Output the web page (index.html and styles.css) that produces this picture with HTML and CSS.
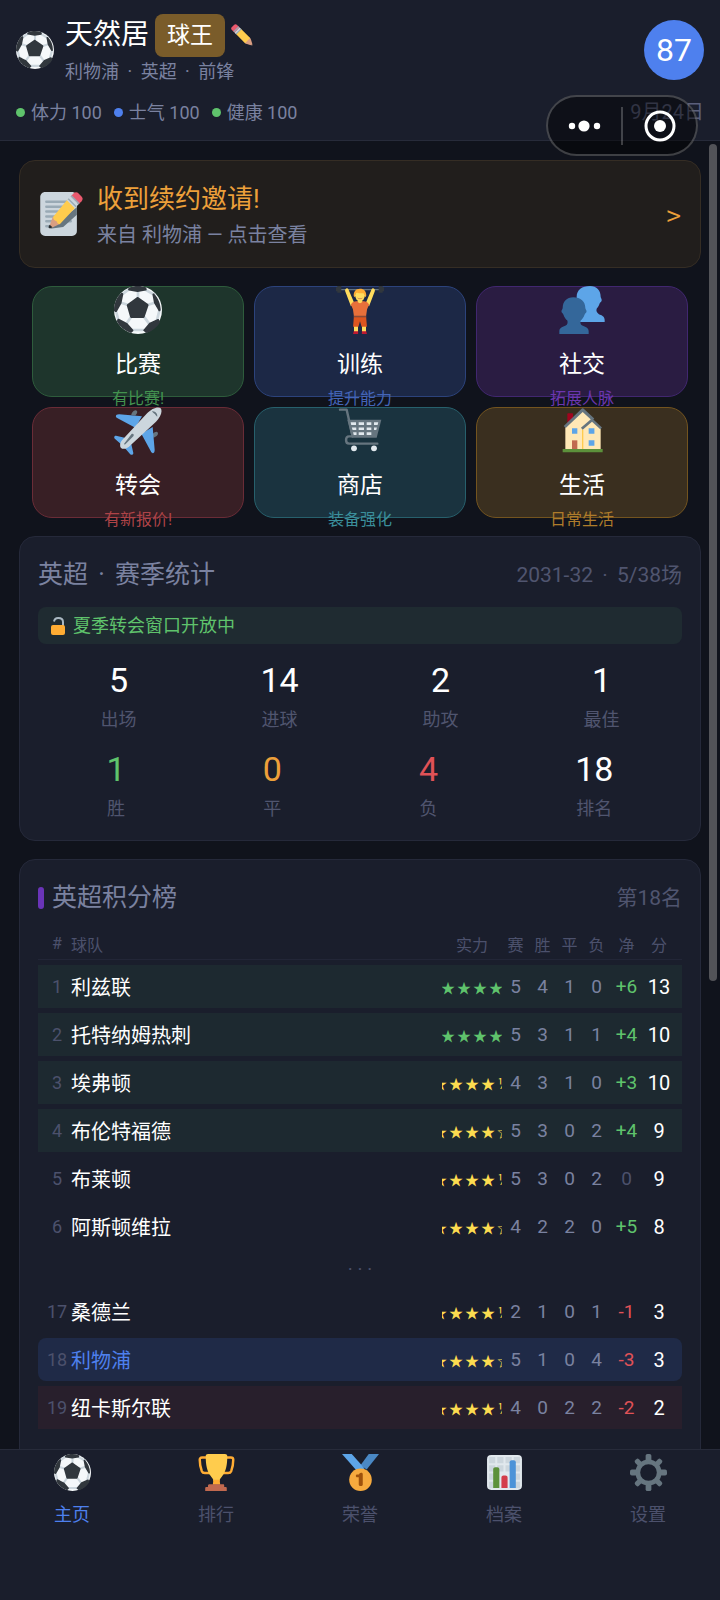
FILE: index.html
```html
<!DOCTYPE html>
<html lang="zh-CN">
<head>
    <meta charset="UTF-8">
    <meta name="viewport" content="width=device-width, initial-scale=1.0">
    <title>球王</title>
    <link rel="stylesheet" href="styles.css">
</head>
<body>
    <!-- shared icons -->
    <svg class="symbols" aria-hidden="true">
        <symbol id="ball" viewBox="0 0 36 36">
            <circle fill="#F5F8FA" cx="18" cy="18" r="18"/>
            <path fill="#CCD6DD" d="M18 11c-.552 0-1-.448-1-1V3c0-.552.448-1 1-1s1 .448 1 1v7c0 .552-.448 1-1 1zm-6.583 4.5c-.1 0-.202-.015-.302-.047l-8.041-2.542c-.527-.167-.819-.728-.652-1.255.166-.527.73-.818 1.255-.652l8.042 2.542c.527.167.819.729.652 1.255-.136.426-.53.699-.954.699zm13.625-.291c-.434 0-.833-.285-.96-.722-.154-.531.151-1.085.682-1.239l6.75-1.958c.531-.153 1.085.153 1.238.682.154.531-.151 1.085-.682 1.239l-6.75 1.958c-.092.027-.186.04-.278.04zm2.001 14.958c-.306 0-.606-.14-.803-.403l-5.459-7.333c-.33-.442-.238-1.069.205-1.399.442-.331 1.069-.238 1.399.205l5.459 7.333c.33.442.238 1.069-.205 1.399-.179.134-.389.198-.596.198zm-18.294-.083c-.197 0-.395-.058-.57-.179-.454-.316-.565-.938-.25-1.392l5.125-7.375c.315-.454.938-.566 1.392-.251.454.315.565.939.25 1.392l-5.125 7.375c-.194.281-.506.43-.822.43zM3.5 27.062c-.44 0-.844-.293-.965-.738L.347 18.262c-.145-.533.17-1.082.704-1.227.535-.141 1.083.171 1.227.704l2.188 8.062c.145.533-.17 1.082-.704 1.226-.088.025-.176.035-.262.035zM22 34h-9c-.552 0-1-.447-1-1s.448-1 1-1h9c.553 0 1 .447 1 1s-.447 1-1 1zm10.126-6.875c-.079 0-.16-.009-.24-.029-.536-.132-.864-.674-.731-1.21l2.125-8.625c.133-.536.679-.862 1.21-.732.536.132.864.674.731 1.211l-2.125 8.625c-.113.455-.521.76-.97.76zM30.312 7.688c-.17 0-.342-.043-.5-.134L22.25 3.179c-.478-.277-.642-.888-.364-1.367.275-.478.886-.643 1.366-.365l7.562 4.375c.478.277.642.889.364 1.367-.185.32-.521.499-.866.499zm-24.811 0c-.312 0-.618-.145-.813-.417-.322-.449-.22-1.074.229-1.396l6.188-4.438c.449-.322 1.074-.219 1.395.229.322.449.219 1.074-.229 1.396L6.083 7.5c-.177.126-.38.188-.582.188z"/>
            <path fill="#31373D" d="M25.493 13.516l-7.208-5.083c-.348-.245-.814-.243-1.161.006l-7.167 5.167c-.343.248-.494.684-.375 1.091l2.5 8.583c.124.426.515.72.96.72H22c.43 0 .81-.274.948-.681l2.917-8.667c.141-.419-.011-.881-.372-1.136zM1.292 19.542c.058 0 .117-.005.175-.016.294-.052.55-.233.697-.494l3.375-6c.051-.091.087-.188.108-.291L6.98 6.2c.06-.294-.016-.6-.206-.832C6.584 5.135 6.3 5 6 5h-.428C2.145 8.277 0 12.884 0 18c0 .266.028.525.04.788l.602.514c.182.156.413.24.65.24zm9.325-16.547c.106.219.313.373.553.412l6.375 1.042c.04.006.081.01.121.01.04 0 .081-.003.122-.01l6.084-1c.2-.033.38-.146.495-.314.116-.168.158-.375.118-.575l-.292-1.443C22.26.407 20.18 0 18 0c-2.425 0-4.734.486-6.845 1.356l-.521.95c-.117.213-.123.47-.017.689zm20.517 2.724l-1.504-.095c-.228-.013-.455.076-.609.249-.152.173-.218.402-.175.63l1.167 6.198c.017.086.048.148.093.224 1.492 2.504 3.152 5.301 3.381 5.782.024.084.062.079.114.151.14.195.372.142.612.142h.007c.198 0 .323.094.768-.753.001-.083.012-.164.012-.247 0-4.753-1.856-9.064-4.866-12.281zM14.541 33.376c.011-.199-.058-.395-.191-.544l-4.5-5c-.06-.066-.131-.122-.211-.163-5.885-3.069-5.994-3.105-6.066-3.13-.078-.025-.161-.039-.242-.039-.537 0-.695.065-1.185 2.024 2.236 4.149 6.053 7.316 10.644 8.703l1.5-1.333c.149-.132.239-.319.251-.518zm18.833-8.567c-.189-.08-.405-.078-.592.005l-6.083 2.667c-.106.046-.2.116-.274.205l-4.25 5.083c-.129.154-.19.352-.172.552.02.2.117.384.272.51.683.559 1.261 1.03 1.767 1.44 4.437-1.294 8.154-4.248 10.454-8.146l-.712-1.889c-.072-.193-.221-.347-.41-.427z"/>
        </symbol>
    </svg>

    <header class="header">
        <div class="profile">
            <svg class="profile-icon"><use href="#ball"/></svg>
            <div class="profile-info">
                <div class="name-row">
                    <h1 class="name">天然居</h1>
                    <span class="badge">球王</span>
                    <button class="edit" type="button" aria-label="编辑">
                        <svg viewBox="0 0 36 36">
                            <path fill="#D99E82" d="M35.222 33.598c-.647-2.101-1.705-6.059-2.325-7.566-.501-1.216-.969-2.438-1.544-3.014-.575-.575-1.553-.53-2.143.058L23.076 29.21c-.588.59-.633 1.568-.058 2.143.576.575 1.798 1.043 3.014 1.544 1.507.62 5.465 1.678 7.566 2.325 1 .3 1.924-.624 1.624-1.624z"/>
                            <path fill="#EA596E" d="M13.643 5.308c1.151 1.151 1.151 3.016 0 4.167l-4.167 4.168c-1.151 1.15-3.018 1.15-4.167 0L1.141 9.475c-1.15-1.151-1.15-3.016 0-4.167l4.167-4.167c1.15-1.151 3.016-1.151 4.167 0z"/>
                            <path fill="#FFCC4D" d="M31.353 23.018l-4.17 4.17-4.163 4.165L7.392 15.726l8.335-8.334z"/>
                            <path fill="#CCD6DD" d="M14.2 5.8l2.6 2.6-8.4 8.4-2.6-2.6z"/>
                            <path fill="#99AAB5" d="M12.1 3.8l1.6 1.6-8.3 8.3-1.6-1.6zM16 7.3l1.4 1.4-8.6 8.6L7.4 16z"/>
                            <path fill="#292F33" d="M35.2 35.2c.6-.6.3-1.6-.2-2.3l-2.1 2.1c.7.5 1.7.8 2.3.2z"/>
                        </svg>
                    </button>
                </div>
                <p class="club">利物浦<span class="sep"> · </span>英超<span class="sep"> · </span>前锋</p>
            </div>
            <span class="rating">87</span>
        </div>
        <div class="status-row">
            <ul class="status">
                <li><span class="dot green"></span>体力 100</li>
                <li><span class="dot blue"></span>士气 100</li>
                <li><span class="dot green"></span>健康 100</li>
            </ul>
            <time class="date">9月24日</time>
        </div>
    </header>

    <!-- mini program capsule -->
    <div class="capsule">
        <button type="button" aria-label="更多">
            <svg width="34" height="12" viewBox="0 0 34 12" fill="#fff">
                <circle cx="4" cy="6" r="3.200"/>
                <circle cx="16" cy="6" r="5.600"/>
                <circle cx="29" cy="6" r="3.200"/>
            </svg>
        </button>
        <span class="capsule-line"></span>
        <button type="button" aria-label="关闭">
            <svg width="32" height="32" viewBox="0 0 32 32">
                <circle cx="16" cy="16" r="14" fill="none" stroke="#fff" stroke-width="3"/>
                <circle cx="16" cy="16" r="6" fill="#fff"/>
            </svg>
        </button>
    </div>

    <main class="main">
        <span class="scroll-thumb"></span>

        <a class="notice" href="#contract">
            <svg class="notice-icon" viewBox="0 0 36 36">
                <path fill="#CCD6DD" d="M31 32c0 2.209-1.791 4-4 4H5c-2.209 0-4-1.791-4-4V4c0-2.209 1.791-4 4-4h22c2.209 0 4 1.791 4 4z"/>
                <path fill="#99AAB5" d="M27 24c0 .553-.447 1-1 1H6c-.552 0-1-.447-1-1 0-.553.448-1 1-1h20c.553 0 1 .447 1 1zm-16 4c0 .553-.448 1-1 1H6c-.552 0-1-.447-1-1 0-.553.448-1 1-1h4c.552 0 1 .447 1 1zM27 8c0 .552-.447 1-1 1H6c-.552 0-1-.448-1-1s.448-1 1-1h20c.553 0 1 .448 1 1zm0 4c0 .553-.447 1-1 1H6c-.552 0-1-.447-1-1 0-.553.448-1 1-1h20c.553 0 1 .447 1 1zm0 4c0 .553-.447 1-1 1H6c-.552 0-1-.447-1-1 0-.553.448-1 1-1h20c.553 0 1 .447 1 1zm0 4c0 .553-.447 1-1 1H6c-.552 0-1-.447-1-1 0-.553.448-1 1-1h20c.553 0 1 .447 1 1z"/>
                <path fill="#66757F" d="M31 12.5v6.2L19.8 28.6 9 30z"/>
                <path fill="#D99E82" d="M8.3 28.4l3.1-8.4 6 6-7.4 3.4z"/>
                <path fill="#EA596E" d="M28.2 1.3c1.3-1.3 2.9-1.4 4.2-.1l2.4 2.4c1.3 1.3 1.2 2.9-.1 4.2l-2.3 2.3-6.5-6.5z"/>
                <path fill="#FFCC4D" d="M23.3 6.2l6.5 6.5L17 26.4c-1.5-.3-2.2-1-2.5-2.5-1.6-.3-2.7-1.4-3-3.5z"/>
                <path fill="#CCD6DD" d="M25.9 3.6l6.5 6.5-3.1 3.1-6.5-6.5z"/>
                <path fill="#99AAB5" d="M26.8 2.7l6.5 6.5-.9.9-6.5-6.5zM24.3 5.2l6.5 6.5-.8.8L23.5 6z"/>
                <path fill="#292F33" d="M8.8 26.8l2.2 2.1c-1.2.9-2.5.9-2.9.6-.5-.5-.3-1.6.7-2.7z"/>
            </svg>
            <span class="notice-text">
                <strong>收到续约邀请!</strong>
                <span>来自 利物浦 — 点击查看</span>
            </span>
            <span class="notice-arrow">&gt;</span>
        </a>

        <section class="actions">
            <button class="action match" type="button">
                <span class="action-icon"><svg><use href="#ball"/></svg></span>
                <span class="action-label">比赛</span>
                <span class="action-tip">有比赛!</span>
            </button>
            <button class="action train" type="button">
                <span class="action-icon">
                    <svg viewBox="0 0 36 36">
                        <path fill="#66757F" d="M2 2.2h32v1H2z"/>
                        <path fill="#31373D" d="M1 0h3v5H1zM0 1h1v3H0zM32 0h3v5h-3zM35 1h1v3h-1z"/>
                        <path fill="#FFDC5D" d="M7.2 2.2c.6-.6 1.7-.6 2.1.2L13.6 12.5l-2.4 2.7L6.9 4c-.2-.8-.1-1.4.3-1.8zM28.8 2.2c-.6-.6-1.7-.6-2.1.2l-4.3 10.1 2.4 2.7L29.1 4c.2-.8.1-1.4-.3-1.8z"/>
                        <path fill="#E8703A" d="M11.2 14c.8-2 2.5-2.6 4-2.6h5.6c1.5 0 3.2.6 4 2.6l-1.5 3.5-.8 5.5h-9l-.8-5.5z"/>
                        <path fill="#FFDC5D" d="M16.3 9h3.4v2.9c-.6 1.3-2.8 1.3-3.4 0zM13.5 29h3v5.5h-3zM19.5 29h3v5.5h-3z"/>
                        <ellipse fill="#FFDC5D" cx="18" cy="7" rx="3.7" ry="4.3"/>
                        <path fill="#FFAC33" d="M18 2c-3.1 0-4.9 2.1-4.7 5.3.2.9.6 1 .9 1-.1-2.5 1-3.3 1.8-3.2 1.8.7 3.7.2 4.4.3.9.4 1.400 1.500 1.400 2.900.4 0 .9-.4.9-1.300C22.7 4 21 2 18 2z"/>
                        <path fill="#DD551F" d="M13.4 23h9.2l.6 7.5h-4L18 26.5l-1.2 4h-4z"/>
                        <path fill="#8A4B38" d="M13.3 22.3h9.4v1.2h-9.4z"/>
                        <path fill="#C1694F" d="M16 8.7c1 1 3 1 4 0-.5 1.6-3.5 1.6-4 0z"/>
                        <path fill="#BE1931" d="M13.3 34h3.3v2h-3.8zM19.4 34h3.3l.5 2h-3.8z"/>
                    </svg>
                </span>
                <span class="action-label">训练</span>
                <span class="action-tip">提升能力</span>
            </button>
            <button class="action social" type="button">
                <span class="action-icon">
                    <svg viewBox="0 0 36 36">
                        <path fill="#5DA5E8" d="M24 0c5 0 8 3.2 8 8 .1 1.2.9 1.6.8 2.7-.1 1.2-1.1 1.3-1.5 2.3-.5 1.7-1.3 3.1-2.3 4.1-.6 1.5.2 3.2 1.700 4 2.100.8 4.300 1.500 4.300 4.400V27H14V8c0-5 4-8 10-8z"/>
                        <path fill="#34679A" d="M11.500 8.500c5.500 0 9 3.300 9 8 .1 1.200 1 1.500.9 2.700-.1 1.100-1.100 1.200-1.500 2.300-.6 1.900-1.700 3.300-2.900 4.300-.5 1.300-.1 3.200 1.200 3.800 2.300.9 4.800 1.600 4.800 4.400v2H1v-2c0-2.800 2.500-3.500 4.800-4.400 1.300-.6 1.700-2.500 1.200-3.800-1.300-1-2.300-2.400-2.900-4.300-.4-1.100-1.400-1.200-1.500-2.300-.1-1.200.8-1.500.9-2.700 0-4.700 3-8 8-8z"/>
                    </svg>
                </span>
                <span class="action-label">社交</span>
                <span class="action-tip">拓展人脉</span>
            </button>
            <button class="action transfer" type="button">
                <span class="action-icon">
                    <svg viewBox="0 0 36 36">
                        <path fill="#66757F" d="M13 6c0-1.5 2-4 3.6-3.4 1.5.6.8 2.3-.6 3.8zM29.5 23c1.5 0 4-2 3.4-3.6-.6-1.5-2.3-.8-3.8.6z"/>
                        <path fill="#5DA5E8" d="M21 7L4 5.5C1.500 5.400.7 7 2 8l14 7.500zM29 15l1.500 17c.1 2.500-1.500 3.300-2.500 2L20.500 20zM8 23l-6.500-1.500C0 21.500-.3 23 .8 24L6 28.500zM13 28l1.500 6.500c0 1.500-1.500 1.800-2.500.7L7.500 30z"/>
                        <path fill="#CCD6DD" d="M35 1c1.800 2.500-.5 7-3.500 10L11 30c-2.500 2-5 1.500-5.700.7-.8-.8-1.300-3.200.7-5.700L25 4.500C28 1.500 33-.8 35 1z"/>
                        <path fill="#66757F" d="M28.500 3.300c2-.7 4.500 1.700 3.900 4-1.200-1.600-2.300-2.500-3.900-4zM13 20.500L8 27c-.8 1-.3 1.500.7.7L14.500 22c1-1.200-.4-2.500-1.500-1.500z"/>
                    </svg>
                </span>
                <span class="action-label">转会</span>
                <span class="action-tip">有新报价!</span>
            </button>
            <button class="action shop" type="button">
                <span class="action-icon">
                    <svg viewBox="0 0 36 36">
                        <path fill="none" stroke="#66757F" stroke-width="1.8" stroke-linecap="round" stroke-linejoin="round" d="M3 2h5l4.5 20H9.8c-3 0-3 5.5 0 5.5H31"/>
                        <path fill="#66757F" d="M8.5 9.5H34L30.5 23H11.8z"/>
                        <path fill="#E1E8ED" d="M11 11.5h4v2h-3.6zM17 11.5h4v2h-4zM23 11.5h3.5v2H23zM28.5 11.5h3.2l-.5 2h-2.7zM11.9 15.3h3.3v2h-2.8zM17 15.3h4v2h-4zM23 15.3h3.5v2H23zM28.5 15.3h2.2l-.5 2h-1.7zM12.8 19h2.6v2h-2.1zM17 19h4v2h-4zM23 19h3.5v2H23z"/>
                        <circle fill="#E1E8ED" cx="13.5" cy="31" r="2.2"/>
                        <circle fill="#E1E8ED" cx="28.5" cy="31" r="2.2"/>
                    </svg>
                </span>
                <span class="action-label">商店</span>
                <span class="action-tip">装备强化</span>
            </button>
            <button class="action life" type="button">
                <span class="action-icon">
                    <svg viewBox="0 0 36 36">
                        <path fill="#A0041E" d="M7 5.500c0-.5.400-.8.800-.8h2.700c.5 0 .8.300.8.800V10L7 13.500z"/>
                        <path fill="#FFE8B6" d="M5.5 15L18.5 3 26 9.500l6 6V32H5.500z"/>
                        <path fill="#FFCC4D" d="M18 17h1v15h-1z"/>
                        <path fill="#66757F" d="M18.500 1c.4 0 .8.200 1 .5l7.700 7.200-1.500 1.600-7.200-6.600L5.800 15.700l-1.500-1.500L17.500 1.500c.3-.3.6-.5 1-.5z"/>
                        <path fill="#66757F" d="M25.500 8.500L33 15.300l-1.300 1.300-6.200-5.600-7 6-1.300-1.500z"/>
                        <path fill="#5DA5E8" d="M10.500 16h4v4h-4zM23 16h4.300v4H23zM23 25h4.300v4H23z"/>
                        <path fill="#C1694F" d="M10.500 25h4v7h-4z"/>
                        <path fill="#5C913B" d="M3.500 31.500h30v2.500h-30z"/>
                    </svg>
                </span>
                <span class="action-label">生活</span>
                <span class="action-tip">日常生活</span>
            </button>
        </section>

        <section class="card">
            <div class="card-head">
                <h2>英超<span class="sep"> · </span>赛季统计</h2>
                <span class="card-note">2031-32<span class="sep"> · </span>5/38场</span>
            </div>
            <p class="window-open">
                <svg viewBox="0 0 14 18">
                    <path fill="none" stroke="#AAB8C2" stroke-width="2" d="M3 4.5C3.5 2 5 1 7.2 1 10 1 12 2.5 12 5v4"/>
                    <rect y="8" width="14" height="10" rx="2" fill="#FFAC33"/>
                </svg>
                夏季转会窗口开放中
            </p>
            <dl class="stats stats-grid">
                <div><dd>5</dd><dt>出场</dt></div>
                <div><dd>14</dd><dt>进球</dt></div>
                <div><dd>2</dd><dt>助攻</dt></div>
                <div><dd>1</dd><dt>最佳</dt></div>
            </dl>
            <dl class="stats stats-flex">
                <div><dd class="win">1</dd><dt>胜</dt></div>
                <div><dd class="draw">0</dd><dt>平</dt></div>
                <div><dd class="loss">4</dd><dt>负</dt></div>
                <div><dd>18</dd><dt>排名</dt></div>
            </dl>
        </section>

        <section class="card">
            <div class="card-head">
                <h2 class="marked">英超积分榜</h2>
                <span class="card-note">第18名</span>
            </div>
            <table class="league">
                <colgroup>
                    <col class="col-rank">
                    <col>
                    <col class="col-stars">
                    <col class="col-num">
                    <col class="col-num">
                    <col class="col-num">
                    <col class="col-num">
                    <col class="col-diff">
                    <col class="col-points">
                </colgroup>
                <thead>
                    <tr><th>#</th><th class="team">球队</th><th>实力</th><th>赛</th><th>胜</th><th>平</th><th>负</th><th>净</th><th>分</th></tr>
                </thead>
                <tbody>
                    <tr class="top">
                        <td class="rank">1</td><td class="team">利兹联</td>
                        <td><div class="stars strong"><i>★</i><i>★</i><i>★</i><i>★</i></div></td>
                        <td>5</td><td>4</td><td>1</td><td>0</td><td class="plus">+6</td><td class="points">13</td>
                    </tr>
                    <tr class="top">
                        <td class="rank">2</td><td class="team">托特纳姆热刺</td>
                        <td><div class="stars strong"><i>★</i><i>★</i><i>★</i><i>★</i></div></td>
                        <td>5</td><td>3</td><td>1</td><td>1</td><td class="plus">+4</td><td class="points">10</td>
                    </tr>
                    <tr class="top">
                        <td class="rank">3</td><td class="team">埃弗顿</td>
                        <td><div class="stars"><i>★</i><i>★</i><i>★</i><i>★</i><b>½</b></div></td>
                        <td>4</td><td>3</td><td>1</td><td>0</td><td class="plus">+3</td><td class="points">10</td>
                    </tr>
                    <tr class="top">
                        <td class="rank">4</td><td class="team">布伦特福德</td>
                        <td><div class="stars"><i>★</i><i>★</i><i>★</i><i>★</i><i>☆</i></div></td>
                        <td>5</td><td>3</td><td>0</td><td>2</td><td class="plus">+4</td><td class="points">9</td>
                    </tr>
                    <tr>
                        <td class="rank">5</td><td class="team">布莱顿</td>
                        <td><div class="stars"><i>★</i><i>★</i><i>★</i><i>★</i><b>½</b></div></td>
                        <td>5</td><td>3</td><td>0</td><td>2</td><td class="zero">0</td><td class="points">9</td>
                    </tr>
                    <tr>
                        <td class="rank">6</td><td class="team">阿斯顿维拉</td>
                        <td><div class="stars"><i>★</i><i>★</i><i>★</i><i>★</i><i>☆</i></div></td>
                        <td>4</td><td>2</td><td>2</td><td>0</td><td class="plus">+5</td><td class="points">8</td>
                    </tr>
                    <tr class="more"><td colspan="9">· · ·</td></tr>
                    <tr>
                        <td class="rank">17</td><td class="team">桑德兰</td>
                        <td><div class="stars"><i>★</i><i>★</i><i>★</i><i>★</i><b>½</b></div></td>
                        <td>2</td><td>1</td><td>0</td><td>1</td><td class="minus">-1</td><td class="points">3</td>
                    </tr>
                    <tr class="mine">
                        <td class="rank">18</td><td class="team">利物浦</td>
                        <td><div class="stars"><i>★</i><i>★</i><i>★</i><i>★</i><i>☆</i></div></td>
                        <td>5</td><td>1</td><td>0</td><td>4</td><td class="minus">-3</td><td class="points">3</td>
                    </tr>
                    <tr class="bottom">
                        <td class="rank">19</td><td class="team">纽卡斯尔联</td>
                        <td><div class="stars"><i>★</i><i>★</i><i>★</i><i>★</i><b>½</b></div></td>
                        <td>4</td><td>0</td><td>2</td><td>2</td><td class="minus">-2</td><td class="points">2</td>
                    </tr>
                </tbody>
            </table>
        </section>
    </main>

    <nav class="tabbar">
        <a class="active" href="#home">
            <svg><use href="#ball"/></svg>
            主页
        </a>
        <a href="#ranking">
            <svg viewBox="0 0 36 36">
                <path fill="none" stroke="#FFAC33" stroke-width="2.4" d="M10 3.5H4c-1.8 0-2.3 1-2.3 2.2 0 4 .8 8 2 11 .6 1.400 1.600 1.800 3 1.800H12M26 3.500h6c1.800 0 2.300 1 2.300 2.200 0 4-.8 8-2 11-.6 1.400-1.600 1.800-3 1.800H24"/>
                <path fill="#FFCC4D" d="M7.5 2c0-1.3 1-2 2.2-2h16.6c1.2 0 2.2.7 2.2 2 0 9-1.5 15-4.5 19-1.8 2.4-3 3.500-3 5.500h-6c0-2-1.200-3.100-3-5.500C9 17 7.500 11 7.500 2z"/>
                <path fill="#FFAC33" d="M15 25h6l.6 5h-7.200z"/>
                <path fill="#C1694F" d="M11.500 29.500h13c.6 0 1 .5 1 1.200V32h1.300c.7 0 1.200.5 1.200 1.200V36H7v-2.800c0-.7.5-1.200 1.200-1.200h1.500v-1.300c0-.7.9-1.200 1.800-1.200z"/>
            </svg>
            排行
        </a>
        <a href="#honours">
            <svg viewBox="0 0 36 36">
                <path fill="#4A88C4" d="M26 0h10L24 15l-6-4z"/>
                <path fill="#5DA5E8" d="M0 0h9.500l12.500 14-7 3z"/>
                <circle fill="#F6AA3E" cx="18" cy="25" r="11"/>
                <path fill="#9E520C" d="M16.300 22.500h-1.600c-.8 0-1.200-.6-1.200-1.200s.4-1.300 1.200-1.300h1.200c.6 0 .8-.6 1.100-1.100.3-.5 1-.7 1.700-.7 1 0 1.500.6 1.500 1.400v10c0 1-.9 1.500-1.900 1.500s-2-.5-2-1.500z"/>
            </svg>
            荣誉
        </a>
        <a href="#records">
            <svg viewBox="0 0 36 36">
                <rect x="1" y="1" width="34" height="34" rx="4" fill="#E1E8ED"/>
                <path fill="#CCD6DD" d="M3 3h6v6H3zM11 3h6v6h-6zM19 3h6v6h-6zM27 3h6v6h-6zM3 11h6v6H3zM11 11h6v6h-6zM19 11h6v6h-6zM27 11h6v6h-6zM3 19h6v6H3zM27 19h6v6h-6zM3 27h6v6H3zM27 27h6v6h-6z"/>
                <path fill="#5C913B" d="M13 15c0-1.100-.9-2-2-2h-2c-1.100 0-2 .9-2 2v18h6z"/>
                <path fill="#D33C4A" d="M21 23c0-1.100-.9-2-2-2h-2c-1.100 0-2 .9-2 2v10h6z"/>
                <path fill="#4C93D8" d="M29 8c0-1.100-.9-2-2-2h-2c-1.100 0-2 .9-2 2v25h6z"/>
            </svg>
            档案
        </a>
        <a href="#settings">
            <svg viewBox="-18 -18 36 36">
                <circle r="10.400" fill="none" stroke="#66757F" stroke-width="4.600"/>
                <g fill="#66757F">
                    <rect x="-2.800" y="-18" width="5.600" height="7" rx="1.800"/>
                    <rect x="-2.800" y="11" width="5.600" height="7" rx="1.800"/>
                    <rect x="-18" y="-2.800" width="7" height="5.600" rx="1.800"/>
                    <rect x="11" y="-2.800" width="7" height="5.600" rx="1.800"/>
                    <g transform="rotate(45)">
                        <rect x="-2.500" y="-17.500" width="5" height="7" rx="1.800"/>
                        <rect x="-2.500" y="10.500" width="5" height="7" rx="1.800"/>
                        <rect x="-17.500" y="-2.500" width="7" height="5" rx="1.800"/>
                        <rect x="10.500" y="-2.500" width="7" height="5" rx="1.800"/>
                    </g>
                </g>
            </svg>
            设置
        </a>
    </nav>
</body>
</html>
```
FILE: styles.css
```css
* {
    box-sizing: border-box;
}

body {
    margin: 0;
    height: 100vh;
    display: flex;
    flex-direction: column;
    position: relative;
    overflow: hidden;
    background: #10131c;
    color: #fff;
    font-family: Roboto, "Noto Sans CJK SC", sans-serif;
    font-size: 18px;
}

h1, h2, p, ul, dl, dd {
    margin: 0;
    padding: 0;
    font-weight: 400;
}

button {
    padding: 0;
    border: 0;
    background: none;
    color: inherit;
    font: inherit;
}

a {
    color: inherit;
    text-decoration: none;
}

svg {
    display: block;
    flex-shrink: 0;
}

.symbols {
    position: absolute;
    width: 0;
    height: 0;
}

.sep {
    margin: 0 4px;
    white-space: pre;
}

/* header */
.header {
    padding: 13px 16px 14px;
    background: #1a1e2c;
    border-bottom: 1px solid #272b3a;
}

.profile {
    display: flex;
    align-items: center;
    gap: 11px;
}

.profile-icon {
    width: 38px;
    height: 38px;
}

.profile-info {
    flex: 1;
}

.name-row {
    display: flex;
    align-items: center;
    gap: 6px;
}

.name {
    font-size: 28px;
    line-height: 44px;
}

.badge {
    padding: 0 12px;
    border-radius: 8px;
    background: #7a5c2a;
    font-size: 23px;
    line-height: 43px;
}

.edit svg {
    width: 22px;
    height: 22px;
}

.club {
    color: #7a82a0;
    line-height: 30px;
}

.rating {
    width: 60px;
    border-radius: 50%;
    background: #4e80ee;
    font-size: 32px;
    line-height: 60px;
    text-align: center;
}

.status-row {
    display: flex;
    justify-content: space-between;
    margin-top: 12px;
    line-height: 27px;
}

.status {
    display: flex;
    gap: 12px;
    list-style: none;
    color: #7a82a0;
}

.status li {
    display: flex;
    align-items: center;
    gap: 6px;
}

.dot {
    width: 9px;
    height: 9px;
    border-radius: 50%;
}

.dot.green {
    background: #5fc36c;
}

.dot.blue {
    background: #4e80ee;
}

.date {
    color: #5a5f7c;
    font-size: 20px;
}

.capsule {
    position: absolute;
    z-index: 2;
    top: 95px;
    right: 22px;
    display: flex;
    align-items: center;
    width: 152px;
    height: 61px;
    border: 2px solid rgba(255, 255, 255, 0.22);
    border-radius: 31px;
    background: rgba(0, 0, 0, 0.45);
}

.capsule button {
    flex: 1;
    display: flex;
    justify-content: center;
}

.capsule-line {
    width: 2px;
    height: 38px;
    background: rgba(255, 255, 255, 0.22);
}

/* content */
.main {
    flex: 1;
    min-height: 0;
    overflow: hidden;
    position: relative;
    display: flex;
    flex-direction: column;
    gap: 18px;
    padding: 19px;
}

.main > * {
    flex-shrink: 0;
}

.scroll-thumb {
    position: absolute;
    top: 3px;
    right: 3px;
    width: 8px;
    height: 64%;
    border-radius: 4px;
    background: #525358;
}

.notice {
    display: flex;
    align-items: center;
    gap: 14px;
    height: 108px;
    padding: 0 19px;
    border: 1px solid #352d24;
    border-radius: 16px;
    background: #211e1c;
}

.notice-icon {
    width: 44px;
    height: 44px;
}

.notice-text {
    flex: 1;
    display: flex;
    flex-direction: column;
    padding-top: 5px;
    color: #7a82a0;
    font-size: 20px;
    line-height: 36px;
}

.notice-text strong {
    color: #eda03a;
    font-size: 26px;
    font-weight: 400;
}

.notice-arrow {
    color: #eda03a;
    font-family: "Noto Sans CJK SC", sans-serif;
    font-size: 26px;
}

.actions {
    display: grid;
    grid-template-columns: repeat(3, 1fr);
    gap: 10px;
    padding: 0 13px;
}

.action {
    display: flex;
    flex-direction: column;
    align-items: center;
    justify-content: center;
    height: 111px;
    padding-top: 4px;
    border: 1px solid;
    border-radius: 20px;
}

.action > span {
    flex-shrink: 0;
}

.action-icon {
    display: flex;
    align-items: center;
    height: 70px;
}

.action-icon svg {
    width: 48px;
    height: 48px;
}

.action-label {
    font-size: 23px;
    line-height: 40px;
}

.action-tip {
    font-size: 16px;
    line-height: 27px;
}

.match {
    background: #1e352c;
    border-color: #2e5c3c;
}

.match .action-tip {
    color: #43924f;
}

.train {
    background: #1c2846;
    border-color: #2c437c;
}

.train .action-tip {
    color: #4465b8;
}

.social {
    background: #2a1c42;
    border-color: #412770;
}

.social .action-tip {
    color: #6c36b0;
}

.transfer {
    background: #381f25;
    border-color: #6a2c37;
}

.transfer .action-tip {
    color: #ae4347;
}

.shop {
    background: #1a333f;
    border-color: #27606c;
}

.shop .action-tip {
    color: #3b8f9b;
}

.life {
    background: #3a2f1f;
    border-color: #73541f;
}

.life .action-tip {
    color: #ae7c2b;
}

/* cards */
.card {
    padding: 18px;
    border: 1px solid #25293a;
    border-radius: 16px;
    background: #1a1e2c;
}

.card-head {
    display: flex;
    align-items: center;
    justify-content: space-between;
    padding-top: 2px;
    line-height: 36px;
    color: #50556f;
}

.card-head h2 {
    display: flex;
    align-items: center;
    color: #7b82a0;
    font-size: 25px;
}

.marked::before {
    content: "";
    width: 6px;
    height: 22px;
    margin-right: 8px;
    border-radius: 3px;
    background: #6a34b8;
}

.card-note {
    font-size: 21px;
}

.window-open {
    display: flex;
    align-items: center;
    gap: 8px;
    margin-top: 14px;
    padding: 0 13px;
    border-radius: 8px;
    background: #1f2b31;
    color: #5fc36c;
    line-height: 37px;
}

.window-open svg {
    width: 14px;
    height: 18px;
}

.stats {
    margin-top: 13px;
    text-align: center;
}

.stats dd {
    font-size: 34px;
    line-height: 46px;
}

.stats dt {
    padding-top: 4px;
    color: #50556f;
    line-height: 26px;
}

.stats > div {
    display: flex;
    flex-direction: column;
}

.stats-grid {
    display: grid;
    grid-template-columns: repeat(4, 1fr);
}

.stats-flex {
    display: flex;
    justify-content: space-around;
}

.stats .win {
    color: #5fc36c;
}

.stats .draw {
    color: #eda03a;
}

.stats .loss {
    color: #e05257;
}

/* league table */
.league {
    width: 100%;
    margin: 7px 0 40px;
    table-layout: fixed;
    border-collapse: separate;
    border-spacing: 0 5px;
    text-align: center;
    font-size: 19px;
    color: #7a82a0;
}

.league th {
    height: 32px;
    padding: 0;
    border-bottom: 1px solid #222637;
    color: #4c516c;
    font-size: 16px;
    font-weight: 400;
}

.league td {
    height: 43px;
    padding: 0;
}

.league th:first-child,
.league td:first-child {
    padding-left: 5px;
}

.league th:last-child,
.league td:last-child {
    padding-right: 7px;
}

.col-rank {
    width: 33px;
}

.col-stars {
    width: 60px;
}

.col-num {
    width: 27px;
}

.col-diff {
    width: 33px;
}

.col-points {
    width: 39px;
}

.league .team {
    text-align: left;
}

.league td.team {
    color: #fff;
    font-size: 20px;
}

.league .rank,
.league .zero {
    color: #4c516c;
}

.league .rank {
    font-size: 18px;
}

.league .plus {
    color: #5fc36c;
}

.league .minus {
    color: #e05257;
}

.league .points {
    color: #fff;
    font-size: 20px;
}

.top td {
    background: #1d2930;
}

.bottom td {
    background: #281f2c;
}

.mine td {
    background: #1f2a47;
}

.mine td:first-child {
    border-radius: 8px 0 0 8px;
}

.mine td:last-child {
    border-radius: 0 8px 8px 0;
}

.league .mine .team {
    color: #4e80ee;
}

.league .more td {
    height: 32px;
    padding: 0;
    color: #4c516c;
}

.stars {
    display: flex;
    justify-content: center;
    overflow: hidden;
    color: #fcdc50;
    font-family: "Noto Sans CJK SC", sans-serif;
    line-height: 24px;
}

.stars.strong {
    color: #5fc36c;
}

.stars i,
.stars b {
    flex: 0 0 16px;
    font-size: 14px;
    font-style: normal;
    font-weight: 400;
}

/* bottom tabs */
.tabbar {
    display: flex;
    height: 151px;
    padding-top: 4px;
    background: #1a1e2c;
    border-top: 1px solid #272b3a;
}

.tabbar a {
    flex: 1;
    display: flex;
    flex-direction: column;
    align-items: center;
    gap: 9px;
    color: #4c516c;
    line-height: 30px;
}

.tabbar .active {
    color: #4e80ee;
}

.tabbar svg {
    width: 37px;
    height: 37px;
}
```
